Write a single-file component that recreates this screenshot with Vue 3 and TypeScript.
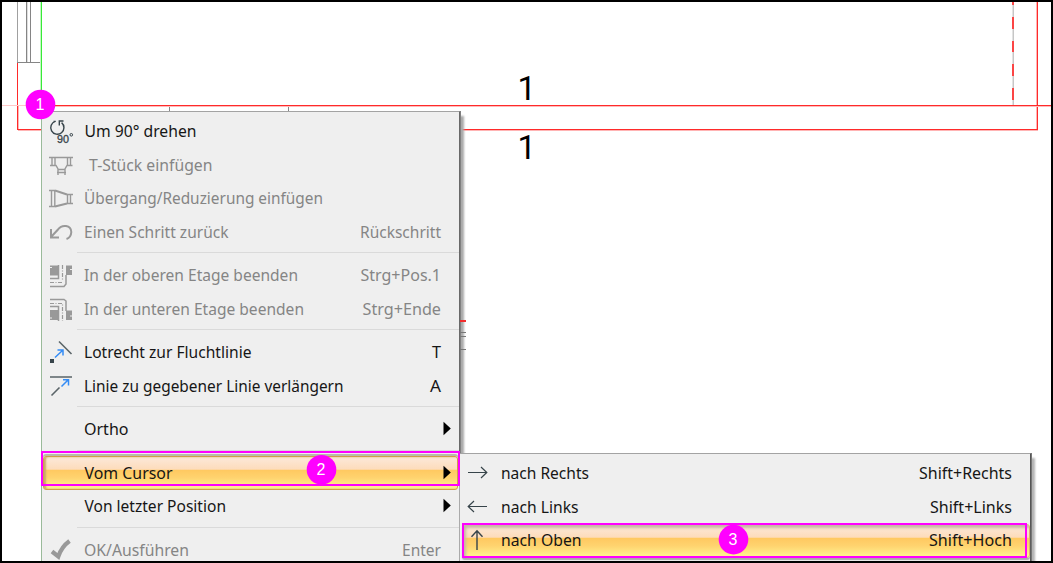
<script setup lang="ts">
interface Entry {
  icon?: string
  text?: string
  x?: number
  w?: number
  key?: string
  kw?: number
  disabled?: boolean
  sub?: boolean
  hot?: boolean
  sep?: boolean
}

const mainEntries: Entry[] = [
  { icon: 'rotate', text: 'Um 90° drehen', x: 84.5, w: 112 },
  { icon: 'tee', text: 'T-Stück einfügen', x: 89, w: 123.5, disabled: true },
  { icon: 'reducer', text: 'Übergang/Reduzierung einfügen', x: 84, w: 239, disabled: true },
  { icon: 'undo', text: 'Einen Schritt zurück', x: 84, w: 144.5, key: 'Rückschritt', kw: 81, disabled: true },
  { sep: true },
  { icon: 'upper', text: 'In der oberen Etage beenden', x: 84, w: 214, key: 'Strg+Pos.1', kw: 80.5, disabled: true },
  { icon: 'lower', text: 'In der unteren Etage beenden', x: 84, w: 220, key: 'Strg+Ende', kw: 78.5, disabled: true },
  { sep: true },
  { icon: 'perp', text: 'Lotrecht zur Fluchtlinie', x: 84, w: 167.5, key: 'T', kw: 9 },
  { icon: 'extend', text: 'Linie zu gegebener Linie verlängern', x: 84, w: 259.5, key: 'A', kw: 11 },
  { sep: true },
  { text: 'Ortho', x: 84, w: 44.5, sub: true },
  { sep: true },
  { text: 'Vom Cursor', x: 84.5, w: 88, sub: true, hot: true },
  { text: 'Von letzter Position', x: 84.5, w: 141.5, sub: true },
  { sep: true },
  { icon: 'check', text: 'OK/Ausführen', x: 84, w: 105, key: 'Enter', kw: 39, disabled: true },
]

const subEntries: Entry[] = [
  { icon: 'right', text: 'nach Rechts', x: 501, w: 88, key: 'Shift+Rechts', kw: 93 },
  { icon: 'left', text: 'nach Links', x: 501, w: 77.5, key: 'Shift+Links', kw: 82 },
  { icon: 'up', text: 'nach Oben', x: 501, w: 80.5, key: 'Shift+Hoch', kw: 83, hot: true },
]

const menus = [
  { name: 'main', left: 41, end: 441, entries: mainEntries },
  { name: 'side', left: 459, end: 1012, entries: subEntries },
]
</script>

<template>
  <div class="stage">
    <svg class="plan" width="1053" height="563" viewBox="0 0 1053 563">
      <g fill="none" shape-rendering="crispEdges">
        <path d="M17.5 0V62" stroke="#a0a0a0" />
        <path d="M26.5 0V62M30.5 0V62M17 62.5H41M169.5 106V111M288.5 106V111" stroke="#858585" />
        <path d="M27.5 0V62" stroke="#dedede" />
        <path d="M18 130.5H1038M1036.5 0V129M18.5 106V129" stroke="#ffb4b4" />
        <path d="M17.5 63V129.5H1037.5V0" stroke="#ff2a2a" />
        <path d="M40.5 0V96" stroke="#c4f8c4" />
        <path d="M41.5 0V96" stroke="#38ea38" />
        <path d="M2 105.5H40" stroke="#ffc8c8" />
        <path d="M55 106.5H1051" stroke="#ffbaba" />
        <path d="M41 105.5H1051" stroke="#ff2a2a" />
        <path d="M1013.5 0V105" stroke="#c6c6c6" />
        <path d="M1012.5 0V105" stroke="#e2e2e2" />
        <path d="M1013 2V5M1013 17V29M1013 41V52M1013 64V76M1013 88V100" stroke="#fb4545" stroke-width="2" />
      </g>
      <text class="dim" x="517.5" y="100">1</text>
      <text class="dim" x="517.5" y="159">1</text>
    </svg>

    <div v-for="m in menus" :key="m.name" class="menu" :class="m.name">
      <svg v-if="m.name === 'main'" class="stubs" width="6" height="34" viewBox="0 0 6 34" fill="none">
        <path d="M0 2H6" stroke="#f32b2b" stroke-width="2" />
        <path d="M0 13.5H6M0 17.5H6M0 30.5H6" stroke="#777" />
      </svg>
      <template v-for="(e, i) in m.entries" :key="i">
        <div v-if="e.sep" class="sep"></div>
        <div v-else class="row" :class="{ disabled: e.disabled, hot: e.hot }">
          <svg class="icon" width="26" height="26" viewBox="0 0 26 26" fill="none" stroke="currentColor">
            <g v-if="e.icon === 'rotate'">
              <path d="M4.5 3.4H6.8M6.2 3.4A6.6 6.6 0 1 0 12.6 4.6M10.3 7.5V3H14.5" stroke-width="1.4" />
              <text x="8" y="25" class="deg" textLength="12" lengthAdjust="spacingAndGlyphs">90</text>
              <circle cx="22.3" cy="16.8" r="1.3" />
            </g>
            <g v-else-if="e.icon === 'tee'" stroke-width="1.4">
              <path d="M0 5.5H24M3 5V13.5M6 5V13.5M1 13.5H7L9 17V23M18.5 5V13.5M21.5 5V13.5M23.5 13.5H18L16 17V23M9 17.5H16M8 20.5H17" />
            </g>
            <g v-else-if="e.icon === 'reducer'" stroke-width="1.4">
              <path d="M0 5.5H6M0 21.5H6M2.5 5V22M5.8 5V22M18.5 9V19M21.5 9V19M18 9.5H24M18 18.5H24" />
              <path d="M6 5.5 18 9.5M6 21.5 18 18.5" stroke-width="2" />
            </g>
            <path v-else-if="e.icon === 'undo'" stroke-width="2" d="M2 10V18.5H10M2 18 9 10.5C13 5 22 6 22.3 13Q22 18.5 17.5 20" />
            <g v-else-if="e.icon === 'upper'">
              <path fill="currentColor" stroke="none" d="M1 3.5H9V13.5H1ZM17 3.5H23V13H17Z" />
              <path d="M9.5 3V16.5H1M17 13V22L15 24.5H1" stroke-width="1.5" />
              <path d="M13.5 3V19M1 20.5H13" stroke-width="1.2" stroke-dasharray="4 1.5 1 1.5" />
              <path d="M0 5.5H3M21 7.5H23" stroke="#efefef" />
            </g>
            <g v-else-if="e.icon === 'lower'">
              <path fill="currentColor" stroke="none" d="M1 14H9V24H1ZM17 14.5H23V24H17Z" />
              <path d="M1 10.5H9.5V25M1 3.5H15L17 5V15" stroke-width="1.5" />
              <path d="M1 7.5H13.5V25" stroke-width="1.2" stroke-dasharray="4 1.5 1 1.5" />
              <path d="M0 22H3M21 20H23" stroke="#efefef" />
            </g>
            <g v-else-if="e.icon === 'perp'">
              <path d="M10 2.5 22.5 15" stroke-width="1.6" stroke="#5a6468" />
              <path d="M6 18.5 14 11M8.5 11H14V16.5" stroke="#348cf5" stroke-width="1.5" />
              <path d="M1 20H5V24H1Z" fill="currentColor" stroke="none" />
            </g>
            <g v-else-if="e.icon === 'extend'">
              <path d="M1 4H23M2.5 22.5 10.5 14.5" stroke-width="1.6" stroke="#5a6468" />
              <path d="M12.5 13.5 19.5 6.5M14 6.8H19.5V12.5" stroke="#348cf5" stroke-width="1.5" />
            </g>
            <path v-else-if="e.icon === 'check'" d="M3 14.5 9.3 19.5C11.5 13 15 8 20.5 4" stroke-width="4.2" />
            <path v-else-if="e.icon === 'right'" d="M1 12.5H20M14 7 19.8 12.5 14 18" stroke-width="1.2" />
            <path v-else-if="e.icon === 'left'" d="M1 12.5H20M7 7 1.2 12.5 7 18" stroke-width="1.2" />
            <path v-else-if="e.icon === 'up'" d="M10 4V23M4.5 9.8 10 3.8 15.5 9.8" stroke-width="1.4" />
          </svg>
          <svg class="line" height="33" :width="m.end - m.left + 20">
            <text :x="(e.x ?? 0) - m.left" y="22" :textLength="e.w" lengthAdjust="spacingAndGlyphs">{{ e.text }}</text>
            <text v-if="e.key" :x="m.end - m.left - (e.kw ?? 0)" y="22" :textLength="e.kw" lengthAdjust="spacingAndGlyphs">{{ e.key }}</text>
            <path v-if="e.sub" d="M402.5 8.8 409.8 15.5 402.5 22.2Z" fill="#000" />
          </svg>
        </div>
      </template>
    </div>

    <div class="mark mark-main"></div>
    <div class="mark mark-side"></div>
    <svg class="badges" width="1053" height="563" viewBox="0 0 1053 563">
      <g fill="#f0f">
        <circle cx="40.5" cy="104.5" r="14.8" />
        <circle cx="321.5" cy="469.7" r="14.8" />
        <circle cx="733.5" cy="539.6" r="14.8" />
      </g>
      <text x="40" y="110">1</text>
      <text x="321" y="475">2</text>
      <text x="733" y="545">3</text>
    </svg>
    <div class="frame"></div>
  </div>
</template>

<style>
body {
  margin: 0;
  overflow: hidden;
}
</style>

<style scoped>
.stage {
  position: relative;
  width: 1053px;
  height: 563px;
  overflow: hidden;
  background: #fff;
  font-family: "Noto Sans", "Open Sans", sans-serif;
}
.plan,
.badges {
  position: absolute;
  inset: 0;
}
.dim {
  font: 33px Roboto, sans-serif;
}
.menu {
  position: absolute;
  box-sizing: border-box;
  background: #efefef;
  border-top: 1px solid #a3a3a3;
}
.main {
  left: 41px;
  top: 111px;
  width: 419px;
  height: 460px;
  padding-top: 3px;
  border-left: 1px solid #9aba9a;
  border-right: 1px solid #696969;
  box-shadow: 1px 0 0 #808080, 4px 5px 2px #aaa;
}
.side {
  left: 459px;
  top: 453px;
  width: 572px;
  height: 120px;
  padding-top: 3px;
  border-left: 1px solid #aaa;
  border-right: 1px solid #555;
  box-shadow: 1px 0 0 #777, 4px 5px 2px #b4b4b4;
}
.stubs {
  position: absolute;
  left: 418px;
  top: 207px;
}
.row {
  position: relative;
  height: 33.6px;
  color: #37444a;
}
.row.disabled {
  color: #999;
}
.icon {
  position: absolute;
  left: 7px;
  top: 3px;
}
.line {
  position: absolute;
  left: -1px;
  top: 0;
  font-size: 16px;
  fill: #161616;
}
.disabled .line {
  fill: #858585;
}
.deg {
  font: 10.5px "Liberation Sans", sans-serif;
  fill: currentColor;
  stroke: currentColor;
  stroke-width: 0.3px;
}
.sep {
  height: 9.8px;
  margin-left: 35px;
  background: linear-gradient(#dadada, #dadada) 0 3px / 100% 1px no-repeat;
}
.hot::before {
  content: "";
  position: absolute;
  inset: -1px 1px 0 1px;
  box-sizing: border-box;
  border: 1px solid #cf9f4a;
  border-radius: 3px;
  background: linear-gradient(#fce9da 0, #fddcbb 38%, #ffc961 42%, #ffd36f 65%, #fff08d 95%);
  box-shadow: inset 2px 0 2px #c8a669, 0 -2px 0 #b9b9ad;
}
.side .hot::before {
  inset: 0 0 0 2px;
  border-color: #d8b66b;
  box-shadow: inset 3px 3px 3px #c6b5a3, 0 2px 1px #aaa;
}
.mark {
  position: absolute;
  box-sizing: border-box;
  border: 2px solid #f0f;
}
.mark-main {
  left: 41px;
  top: 451px;
  width: 419px;
  height: 35px;
}
.mark-side {
  left: 462px;
  top: 523px;
  width: 565px;
  height: 35px;
}
.badges text {
  font: 16px "Liberation Sans", sans-serif;
  fill: #fff;
  text-anchor: middle;
}
.frame {
  position: absolute;
  inset: 0;
  border: 2px solid #000;
}
</style>
